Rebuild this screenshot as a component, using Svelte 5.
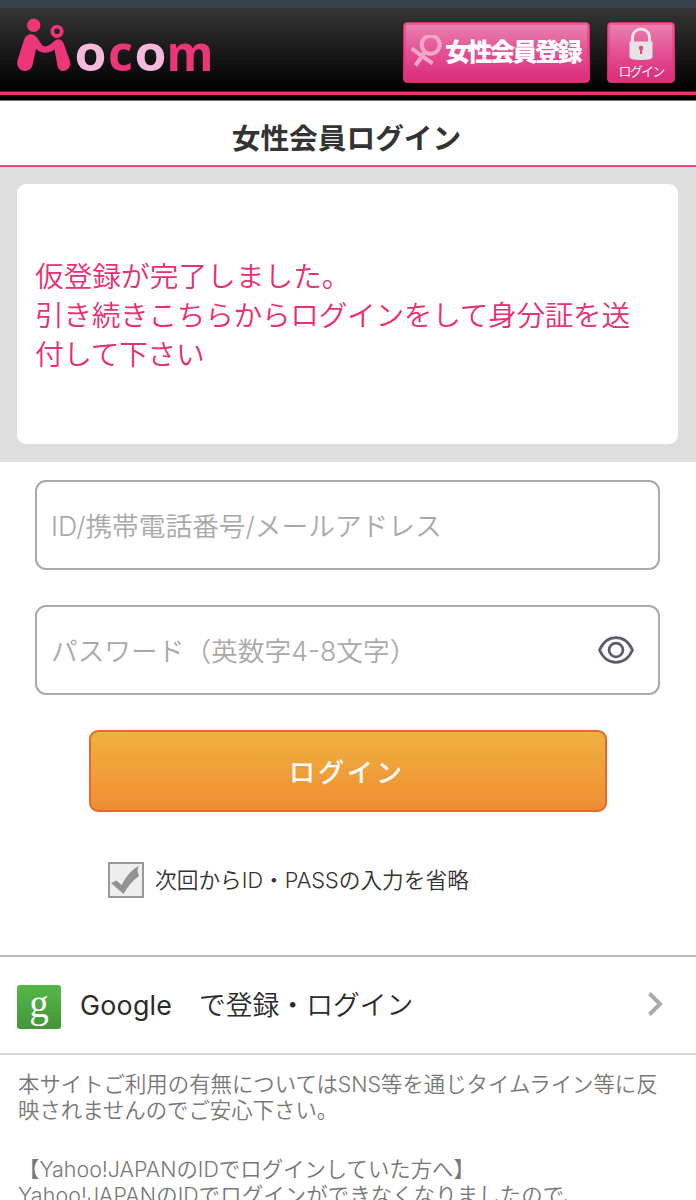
<script lang="ts">
  let userId = "";
  let password = "";
  let showPassword = false;
  let remember = true;
</script>

<div class="page">
  <div class="statusbar"></div>
  <header>
    <svg class="logo" width="206" height="66" viewBox="0 0 206 66">
      <g fill="#ec3677">
        <circle cx="22.700" cy="14.300" r="6.700" />
        <path
          d="M6.300 50 L13 29 C15 22 23.500 21 27 28 C30 33 32 35.500 34.500 35.500 C38 35 41 32 44 29.500 C47 27 51 28 52.500 32 L59.300 51 C60 61 48 63 46.500 55 L43.500 38.500 C37 43 31 43 25 38 L21.500 54 C19 63 5 62 6.300 50 Z"
        />
      </g>
      <circle cx="46" cy="20.300" r="4.700" fill="none" stroke="#ec3677" stroke-width="3.800" />
      <text x="63.500" y="60" fill="#f5b9db" textLength="32" lengthAdjust="spacingAndGlyphs">o</text>
      <text x="97" y="60" fill="#ec3677" textLength="25" lengthAdjust="spacingAndGlyphs">c</text>
      <text x="123.500" y="60" fill="#f5b9db" textLength="32" lengthAdjust="spacingAndGlyphs">o</text>
      <text x="155.500" y="60" fill="#ec3677" textLength="47" lengthAdjust="spacingAndGlyphs">m</text>
    </svg>
    <button class="btn register">
      <svg width="33" height="36" viewBox="0 0 33 36" fill="none" stroke="#f3a6ca">
        <circle cx="19.700" cy="9.800" r="9" stroke-width="4" />
        <path d="M14 17 L4.500 30.500 M0.500 13.500 L21.500 28.500" stroke-width="4" />
      </svg>
      <span>女性会員登録</span>
    </button>
    <button class="btn signin">
      <svg width="24" height="34" viewBox="0 0 24 34">
        <path d="M3.500 17 V11 C3.500 -1 20.500 -1 20.500 11 V17" fill="none" stroke="#e5e4e4" stroke-width="3" />
        <path d="M0.500 14.500 H23.500 V30 Q23.500 33 12 33 Q0.500 33 0.500 30 Z" fill="#e5e4e4" />
        <circle cx="12" cy="21" r="2.300" fill="#e14b8d" />
        <path d="M11 21 H13.200 V27 H11 Z" fill="#e14b8d" />
      </svg>
      <span>ログイン</span>
    </button>
  </header>

  <h1>女性会員ログイン</h1>

  <section class="notice">
    <p>
      <span>仮登録が完了しました。</span><br />
      <span class="tight">引き続きこちらからログインをして身分証を送</span><br />
      <span class="tight">付して下さい</span>
    </p>
  </section>

  <form on:submit|preventDefault>
    <div class="field">
      <input type="text" placeholder="ID/携帯電話番号/メールアドレス" bind:value={userId} />
    </div>
    <div class="field">
      {#if showPassword}
        <input type="text" placeholder="パスワード（英数字4-8文字）" bind:value={password} />
      {:else}
        <input type="password" placeholder="パスワード（英数字4-8文字）" bind:value={password} />
      {/if}
      <button
        class="eye"
        type="button"
        aria-label="パスワードを表示"
        on:click={() => (showPassword = !showPassword)}
      >
        <svg width="36" height="28" viewBox="0 0 36 28" fill="none" stroke="#5f5b6d" stroke-width="2.800">
          <path d="M1.500 14 C9 -2.500 27 -2.500 34.500 14 C27 30.500 9 30.500 1.500 14 Z" stroke-linejoin="round" />
          <circle cx="18" cy="14" r="6.900" />
        </svg>
      </button>
    </div>
    <button class="submit">ログイン</button>
    <label class="remember">
      <input type="checkbox" bind:checked={remember} />
      <span class="box">
        {#if remember}
          <svg width="32" height="32" viewBox="0 0 32 32">
            <path d="M1 19 L6.500 16.500 L11.500 21 C16 13 21 6 28.500 2 L27.500 7 L29 12 C23 16 18 22 13.500 30 Z" fill="#929292" />
          </svg>
        {/if}
      </span>
      <span class="remember-text">次回からID・PASSの入力を省略</span>
    </label>
  </form>

  <a class="google" href="#google">
    <span class="google-icon">g</span>
    <span class="google-text"><span class="brand">Google</span>　で登録・ログイン</span>
    <svg width="18" height="26" viewBox="0 0 18 26" fill="none" stroke="#aaa" stroke-width="4">
      <path d="M2.500 1.500 L13 12 L2.500 22.500" />
    </svg>
  </a>

  <footer>
    <p>
      本サイトご利用の有無についてはSNS等を通じタイムライン等に反<br />映されませんのでご安心下さい。
    </p>
    <p>
      【Yahoo!JAPANのIDでログインしていた方へ】<br />
      <span class="wide">Yahoo!JAPANのIDでログインができなくなりましたので、</span>
    </p>
  </footer>
</div>

<style>
  :global(body) {
    margin: 0;
    background: #fff;
  }

  .page {
    height: 1200px;
    overflow: hidden;
    font-family: Inter, "Noto Sans CJK JP", sans-serif;
    font-weight: 350;
    color: #333;
  }

  .page * {
    box-sizing: border-box;
  }

  button,
  input {
    font-family: inherit;
    font-weight: inherit;
    padding: 0;
  }

  .statusbar {
    height: 8px;
    background: #3a414e;
  }

  header {
    display: flex;
    align-items: flex-start;
    height: 93px;
    padding: 0 21px 0 11px;
    background:
      linear-gradient(#777, #777) 0 92px / 100% 1px no-repeat,
      linear-gradient(#ec3677, #ec3677) 0 84px / 100% 3px no-repeat,
      linear-gradient(#4b2632, #4b2632) 0 83px / 100% 1px no-repeat,
      linear-gradient(#353535, #000 83px);
  }

  .logo {
    margin: 3px 186px 0 0;
    overflow: visible;
    font: bold 49px "Open Sans", sans-serif;
  }

  .btn {
    display: flex;
    height: 61px;
    margin-top: 14px;
    border: 1px solid #cf316f;
    border-radius: 4px;
    box-shadow: inset 0 0 0 2px rgba(235, 50, 122, 0.5);
    background: linear-gradient(#ea83b0, #e45597 45%, #dc317e 90%);
    color: #fff;
  }

  .register {
    width: 187px;
    align-items: center;
    padding-left: 7px;
  }

  .register span {
    margin: 0 0 1px 1px;
    font-size: 25px;
    line-height: 30px;
    font-weight: 900;
    letter-spacing: -2.5px;
    white-space: nowrap;
  }

  .signin {
    width: 68px;
    margin-left: 17px;
    flex-direction: column;
    align-items: center;
    padding-top: 4px;
  }

  .signin span {
    font-size: 13px;
    line-height: 20px;
    letter-spacing: -1.8px;
    white-space: nowrap;
  }

  h1 {
    height: 66px;
    margin: 0;
    padding-right: 3px;
    border-bottom: 2px solid #e04c84;
    font-size: 28.7px;
    line-height: 76px;
    font-weight: bold;
    text-align: center;
    color: #333;
  }

  .notice {
    height: 295px;
    padding: 17px 18px 18px 17px;
    background: #dedede;
  }

  .notice p {
    height: 260px;
    margin: 0;
    padding: 73px 0 0 18px;
    border-radius: 9px;
    background: #fff;
    color: #ea2f72;
    font-size: 28.7px;
    line-height: 39px;
    white-space: nowrap;
  }

  .tight {
    letter-spacing: -0.32px;
  }

  form {
    height: 493px;
    padding: 18px 36px 0 35px;
  }

  .field {
    display: flex;
    align-items: center;
    height: 90px;
    margin-bottom: 35px;
    padding: 0 24px 0 14px;
    border: 2px solid #aaa;
    border-radius: 11px;
  }

  .field input {
    flex: 1;
    min-width: 0;
    height: 60px;
    padding-top: 2px;
    border: 0;
    outline: 0;
    background: none;
    font-size: 26.7px;
  }

  .field input::placeholder {
    color: #a9a9a9;
  }

  .eye {
    display: flex;
    border: 0;
    background: none;
  }

  .submit {
    display: block;
    width: 518px;
    height: 82px;
    margin-left: 54px;
    padding: 4px 2px 0 0;
    border: 2px solid #e6692c;
    border-radius: 9px;
    background: linear-gradient(#f1b140, #ef8d34);
    color: #fff;
    font-size: 26px;
    line-height: 74px;
    font-weight: 500;
    letter-spacing: 3px;
  }

  .remember {
    display: flex;
    align-items: center;
    margin: 50px 0 0 73px;
  }

  .remember input {
    display: none;
  }

  .box {
    display: flex;
    width: 36px;
    height: 36px;
    border: 2px solid #999;
    background: #eee;
  }

  .remember-text {
    margin-left: 11px;
    font-size: 21.7px;
    line-height: 32px;
    white-space: nowrap;
  }

  .google {
    display: flex;
    align-items: center;
    height: 100px;
    padding: 0 31px 0 17px;
    border-top: 2px solid #bbb;
    border-bottom: 2px solid #d9d9d9;
    color: #2b2b2b;
    text-decoration: none;
  }

  .google-icon {
    width: 44px;
    height: 44px;
    margin-top: 3px;
    border-radius: 3px;
    background: linear-gradient(#55b748, #45953a);
    color: #fff;
    font: 39px/38px "Liberation Serif", serif;
    text-align: center;
  }

  .google-text {
    flex: 1;
    margin-left: 19px;
    font-size: 26.8px;
    line-height: 40px;
    white-space: nowrap;
  }

  .brand {
    font-weight: 400;
    letter-spacing: 0.25px;
  }

  footer {
    padding: 17px 0 0 18px;
    color: #777;
    font-size: 21.4px;
    line-height: 25.5px;
    white-space: nowrap;
  }

  footer p {
    margin: 0 0 34px;
  }

  .wide {
    letter-spacing: 0.1px;
  }
</style>
